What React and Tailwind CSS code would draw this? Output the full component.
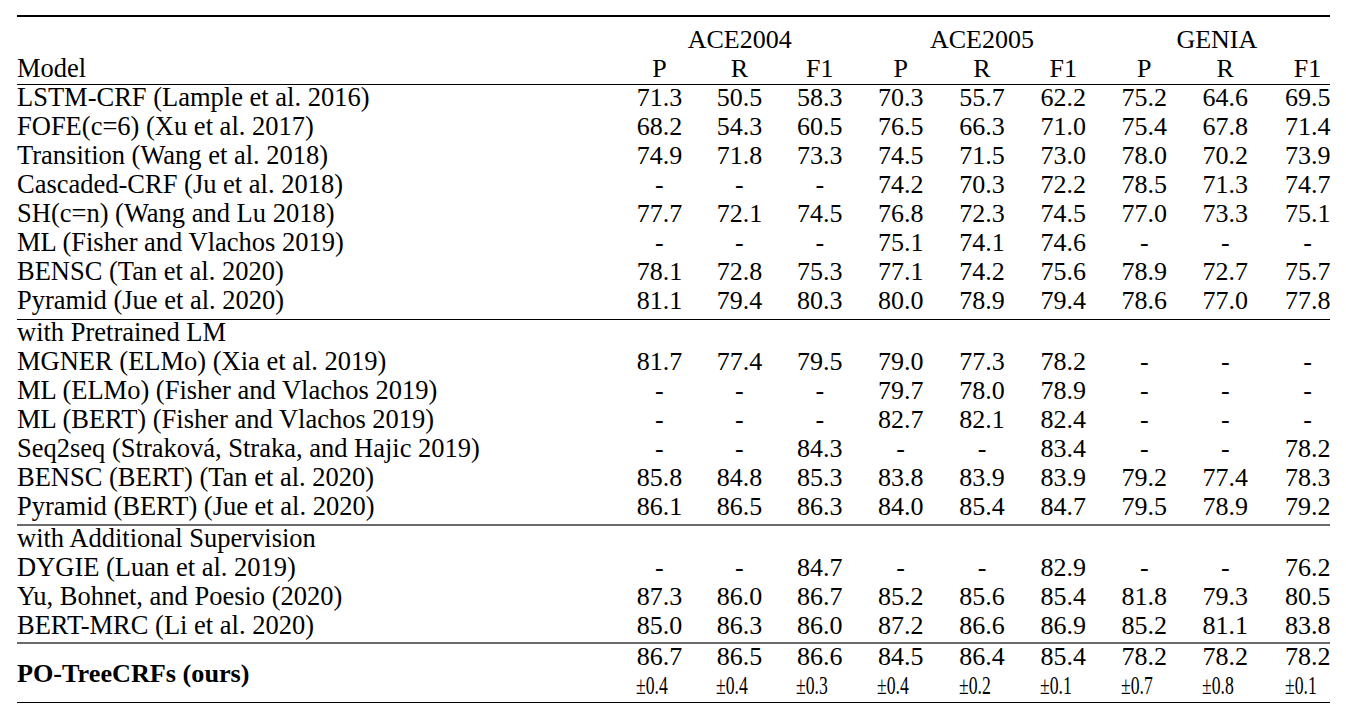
import React from "react";

const COLS =
  "grid grid-cols-[1fr_79.75px_80.25px_80.5px_81.25px_81.5px_81px_81px_81px_64.25px]";

const g1 = [
  ["LSTM-CRF (Lample et al. 2016)", "71.3", "50.5", "58.3", "70.3", "55.7", "62.2", "75.2", "64.6", "69.5"],
  ["FOFE(c=6) (Xu et al. 2017)", "68.2", "54.3", "60.5", "76.5", "66.3", "71.0", "75.4", "67.8", "71.4"],
  ["Transition (Wang et al. 2018)", "74.9", "71.8", "73.3", "74.5", "71.5", "73.0", "78.0", "70.2", "73.9"],
  ["Cascaded-CRF (Ju et al. 2018)", "-", "-", "-", "74.2", "70.3", "72.2", "78.5", "71.3", "74.7"],
  ["SH(c=n) (Wang and Lu 2018)", "77.7", "72.1", "74.5", "76.8", "72.3", "74.5", "77.0", "73.3", "75.1"],
  ["ML (Fisher and Vlachos 2019)", "-", "-", "-", "75.1", "74.1", "74.6", "-", "-", "-"],
  ["BENSC (Tan et al. 2020)", "78.1", "72.8", "75.3", "77.1", "74.2", "75.6", "78.9", "72.7", "75.7"],
  ["Pyramid (Jue et al. 2020)", "81.1", "79.4", "80.3", "80.0", "78.9", "79.4", "78.6", "77.0", "77.8"],
];

const g2 = [
  ["with Pretrained LM"],
  ["MGNER (ELMo) (Xia et al. 2019)", "81.7", "77.4", "79.5", "79.0", "77.3", "78.2", "-", "-", "-"],
  ["ML (ELMo) (Fisher and Vlachos 2019)", "-", "-", "-", "79.7", "78.0", "78.9", "-", "-", "-"],
  ["ML (BERT) (Fisher and Vlachos 2019)", "-", "-", "-", "82.7", "82.1", "82.4", "-", "-", "-"],
  ["Seq2seq (Straková, Straka, and Hajic 2019)", "-", "-", "84.3", "-", "-", "83.4", "-", "-", "78.2"],
  ["BENSC (BERT) (Tan et al. 2020)", "85.8", "84.8", "85.3", "83.8", "83.9", "83.9", "79.2", "77.4", "78.3"],
  ["Pyramid (BERT) (Jue et al. 2020)", "86.1", "86.5", "86.3", "84.0", "85.4", "84.7", "79.5", "78.9", "79.2"],
];

const g3 = [
  ["with Additional Supervision"],
  ["DYGIE (Luan et al. 2019)", "-", "-", "84.7", "-", "-", "82.9", "-", "-", "76.2"],
  ["Yu, Bohnet, and Poesio (2020)", "87.3", "86.0", "86.7", "85.2", "85.6", "85.4", "81.8", "79.3", "80.5"],
  ["BERT-MRC (Li et al. 2020)", "85.0", "86.3", "86.0", "87.2", "86.6", "86.9", "85.2", "81.1", "83.8"],
];

const ours = ["86.7", "86.5", "86.6", "84.5", "86.4", "85.4", "78.2", "78.2", "78.2"];
const pm = ["0.4", "0.4", "0.3", "0.4", "0.2", "0.1", "0.7", "0.8", "0.1"];

function Cell({ i, children }) {
  return (
    <div className={i === 8 ? "pl-[19.25px] text-center whitespace-nowrap" : "text-center whitespace-nowrap"}>
      {children}
    </div>
  );
}

function Row({ r }) {
  return (
    <div className={`${COLS} leading-[25px] pb-[4px]`}>
      <div className="whitespace-nowrap text-[26.5px]">{r[0]}</div>
      {r.slice(1).map((v, i) => (
        <Cell key={i} i={i}>
          {v}
        </Cell>
      ))}
    </div>
  );
}

export default function App() {
  return (
    <div className="bg-white w-[1346px] h-[708px] overflow-hidden pt-[15px] pl-[17px] text-black font-[family-name:'Liberation_Serif','Times_New_Roman',serif] text-[26px]">
      <div className="w-[1313px]">
        <div className="h-[2px] bg-black" />
        <div className={`${COLS} mt-[10px] leading-[25px] pb-[4px]`}>
          <div />
          <div className="col-span-3 text-center">ACE2004</div>
          <div className="col-span-3 text-center">ACE2005</div>
          <div className="col-span-3 text-center">GENIA</div>
        </div>
        <div className={`${COLS} leading-[25px] pb-[3px]`}>
          <div className="text-[26.5px]">Model</div>
          {["P", "R", "F1", "P", "R", "F1", "P", "R", "F1"].map((h, i) => (
            <Cell key={i} i={i}>
              {h}
            </Cell>
          ))}
        </div>
        <div className="h-px bg-black" />
        {g1.map((r, i) => (
          <Row key={i} r={r} />
        ))}
        <div className="mt-[2px] h-px bg-black" />
        {g2.map((r, i) => (
          <Row key={i} r={r} />
        ))}
        <div className="mt-[1px] h-[2px] bg-[#6a6a6a]" />
        {g3.map((r, i) => (
          <Row key={i} r={r} />
        ))}
        <div className="h-[2px] bg-[#6a6a6a]" />
        <div className={`${COLS} grid-rows-[29px_29px]`}>
          <div className="row-span-2 self-center font-bold text-[26.2px] leading-[25px] whitespace-nowrap">PO-TreeCRFs (ours)</div>
          {ours.map((v, i) => (
            <div key={i} className={`${i === 8 ? "pl-[19.25px] " : ""}text-center leading-[25px] pb-[4px]`}>
              {v}
            </div>
          ))}
          {pm.map((v, i) => (
            <div key={i} className={`${i === 8 ? "pl-[19.25px] " : ""}text-center leading-[25px] pb-[4px]`}>
              <span className="inline-block scale-x-[0.68] origin-left whitespace-nowrap">±{v}</span>
            </div>
          ))}
        </div>
        <div className="h-px bg-black" />
        <div className="font-bold text-[26.2px] leading-[25px] pt-[2px] whitespace-nowrap">PO-TreeCRFs Ablation Study</div>
      </div>
    </div>
  );
}
